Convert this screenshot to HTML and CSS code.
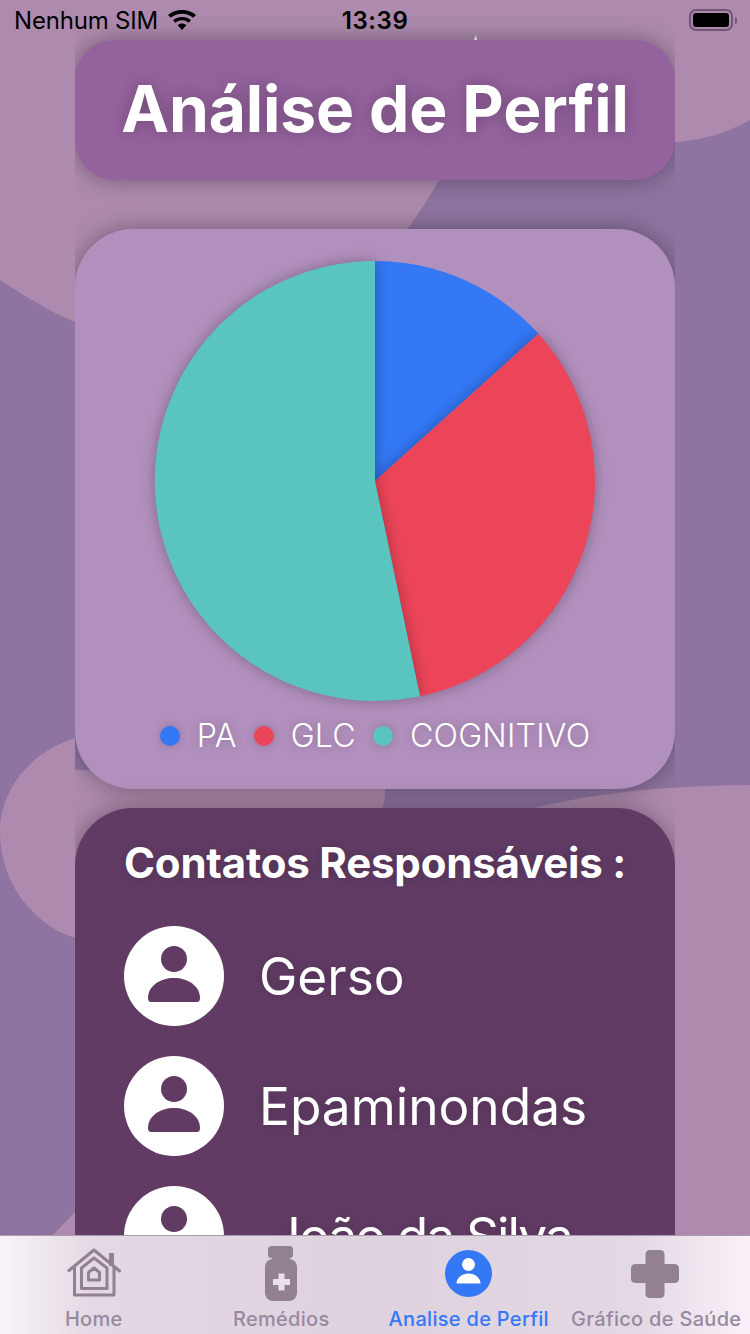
FILE: index.html
```html
<!DOCTYPE html>
<html lang="pt-BR">
<head>
  <meta charset="UTF-8">
  <meta name="viewport" content="width=device-width, initial-scale=1.0">
  <title>Análise de Perfil</title>
  <link rel="stylesheet" href="styles.css">
</head>
<body>
  <div class="screen">
    <!-- fundo -->
    <svg class="blobs" viewBox="0 0 750 1334" width="750" height="1334">
      <path d="M0 0H750V120C725 134 695 143 655 143C590 143 520 148 470 150L438 182C425 205 415 218 407 230C330 300 200 335 75 322C50 312 25 296 0 280Z"/>
      <path d="M75 738C30 752 0 790 0 832C0 885 35 925 75 938C160 960 385 900 385 790V770H75Z"/>
      <path d="M750 785C680 786 610 790 538 807C500 818 470 835 450 860V1000H600V1334H750Z"/>
      <path d="M52 1236L75 1212V1240H52Z"/>
      <path class="tick" d="M474 40L476 35L477 40Z"/>
    </svg>

    <div class="status-bar">
      <div class="status-left">
        <span>Nenhum SIM</span>
        <svg class="wifi" viewBox="0 0 30 20" width="30" height="20">
          <path d="M15 20L10.6 15.2C13 13 17 13 19.4 15.2Z"/>
          <path d="M8.4 12.8L6 10.2C10.800 5.800 19.200 5.800 24 10.200L21.600 12.800C18 9.500 12 9.500 8.400 12.800Z"/>
          <path d="M3.800 7.800L1 4.900C8.500 -1.600 21.500 -1.600 29 4.900L26.200 7.800C19.800 2.400 10.200 2.400 3.800 7.800Z"/>
        </svg>
      </div>
      <div class="status-time">13:39</div>
      <div class="status-right">
        <div class="battery"><div class="battery-fill"></div></div>
        <div class="battery-tip"></div>
      </div>
    </div>

    <div class="content">
      <div class="title-card">
        <h1>Análise de Perfil</h1>
      </div>

      <div class="chart-card">
        <svg class="pie" viewBox="0 0 440 440" width="440" height="440">
          <path class="slice-blue" d="M220 220V0A220 220 0 0 1 383.500 72.800Z"/>
          <path class="slice-red" d="M220 220L383.500 72.800A220 220 0 0 1 265 435.300Z"/>
          <path class="slice-teal" d="M220 220L265 435.300A220 220 0 1 1 220 0Z"/>
        </svg>
        <div class="legend">
          <div class="dot dot-blue"></div><span>PA</span>
          <div class="dot dot-red"></div><span>GLC</span>
          <div class="dot dot-teal"></div><span>COGNITIVO</span>
        </div>
      </div>

      <div class="contacts-card">
        <h2>Contatos Responsáveis :</h2>
        <div class="contact">
          <svg class="avatar" viewBox="0 0 100 100" width="100" height="100">
            <circle cx="50" cy="50" r="50" fill="#fff"/>
            <circle cx="50" cy="33" r="13" fill="#613b64"/>
            <path fill="#613b64" d="M24 72C24 60 36 52 50 52C64 52 76 60 76 72Q76 76 73 76H27Q24 76 24 72Z"/>
          </svg>
          <span>Gerso</span>
        </div>
        <div class="contact">
          <svg class="avatar" viewBox="0 0 100 100" width="100" height="100">
            <circle cx="50" cy="50" r="50" fill="#fff"/>
            <circle cx="50" cy="33" r="13" fill="#613b64"/>
            <path fill="#613b64" d="M24 72C24 60 36 52 50 52C64 52 76 60 76 72Q76 76 73 76H27Q24 76 24 72Z"/>
          </svg>
          <span>Epaminondas</span>
        </div>
        <div class="contact">
          <svg class="avatar" viewBox="0 0 100 100" width="100" height="100">
            <circle cx="50" cy="50" r="50" fill="#fff"/>
            <circle cx="50" cy="33" r="13" fill="#613b64"/>
            <path fill="#613b64" d="M24 72C24 60 36 52 50 52C64 52 76 60 76 72Q76 76 73 76H27Q24 76 24 72Z"/>
          </svg>
          <span class="name-tight">&nbsp;João da Silva</span>
        </div>
      </div>
    </div>

    <!-- abas -->
    <nav class="tab-bar">
      <div class="tab">
        <svg class="tab-icon" viewBox="0 0 54 50" width="54" height="50">
          <g fill="none" stroke="#918191" stroke-width="3" stroke-linejoin="round" stroke-linecap="round">
            <path d="M2 22.500L27 2L52.500 23"/>
            <path d="M7.500 20V47H47V20"/>
            <path d="M14.500 20V40.500H40V20L27 10Z"/>
            <path d="M21.500 24.500L27 20L32.500 24.500V32H21.500Z"/>
          </g>
          <rect x="42" y="5" width="5" height="13" fill="#918191"/>
        </svg>
        <span>Home</span>
      </div>
      <div class="tab">
        <svg class="tab-icon" viewBox="0 2 54 50" width="54" height="50">
          <rect x="14" y="0" width="25" height="12" rx="3.500" fill="#918191"/>
          <rect x="18" y="8" width="18" height="8" fill="#918191"/>
          <rect x="11" y="13" width="32" height="42" rx="8" fill="#918191"/>
          <path fill="#e9e0e9" d="M24.500 27.500H30.500V33H36V39H30.500V44.500H24.500V39H19V33H24.500Z"/>
        </svg>
        <span>Remédios</span>
      </div>
      <div class="tab tab-active">
        <svg class="tab-icon" viewBox="0 0 54 50" width="54" height="50">
          <circle cx="26.500" cy="25.500" r="23.500" fill="#3478f6"/>
          <circle cx="26.500" cy="16.500" r="6.500" fill="#fff"/>
          <path fill="#fff" d="M14.500 35.500C14.500 29.500 20.500 25.500 26.500 25.500C32.500 25.500 38.500 29.500 38.500 35.500Z"/>
        </svg>
        <span>Analise de Perfil</span>
      </div>
      <div class="tab">
        <svg class="tab-icon" viewBox="1 -1 54 50" width="54" height="50">
          <path fill="#918191" d="M22 1H32Q36.500 1 36.500 5.500V15H46Q51 15 51 19.500V29.500Q51 34 46 34H36.500V44.500Q36.500 49 32 49H22Q17.500 49 17.500 44.500V34H8Q3 34 3 29.500V19.500Q3 15 8 15H17.500V5.500Q17.500 1 22 1Z"/>
        </svg>
        <span>Gráfico de Saúde</span>
      </div>
    </nav>
  </div>
</body>
</html>
```

FILE: styles.css
```css
/* tela inteira */
body {
  margin: 0;
  font-family: "Inter", "Liberation Sans", sans-serif;
}
.screen {
  position: relative;
  width: 750px;
  height: 1334px;
  overflow: hidden;
  background-color: #8f74a1;
}
.blobs {
  position: absolute;
  top: 0;
  left: 0;
  fill: #ae8bae;
}
.tick {
  fill: #fff;
}

/* barra de status */
.status-bar {
  position: relative;
  display: grid;
  grid-template-columns: 1fr 1fr 1fr;
  align-items: center;
  height: 40px;
  padding: 0 14px;
  box-sizing: border-box;
  color: #000;
  font-size: 24px;
}
.status-left {
  display: flex;
  align-items: center;
  gap: 9px;
  letter-spacing: -0.2px;
}
.status-time {
  text-align: center;
  font-weight: 600;
  letter-spacing: 0.6px;
}
.status-right {
  display: flex;
  justify-content: flex-end;
  align-items: center;
  gap: 2px;
  margin-right: -1px;
}
.battery {
  width: 44px;
  height: 22px;
  box-sizing: border-box;
  border: 2px solid #6f5775;
  border-radius: 7px;
  padding: 2px;
}
.battery-fill {
  height: 100%;
  background-color: #000;
  border-radius: 3px;
}
.battery-tip {
  width: 2px;
  height: 7px;
  background-color: #6f5775;
  border-radius: 0 2px 2px 0;
}
.wifi {
  fill: #000;
}

/* coluna dos cartões */
.content {
  position: relative;
  width: 600px;
  margin: 0 auto;
  overflow-x: clip;
  display: flex;
  flex-direction: column;
}
.title-card {
  height: 140px;
  padding-bottom: 4px;
  box-sizing: border-box;
  display: flex;
  align-items: center;
  justify-content: center;
  background-color: #94629d;
  border-radius: 40px;
  box-shadow: 0 0 24px rgba(0, 0, 0, 0.35);
}
h1 {
  margin: 0;
  color: #fff;
  font-size: 64px;
  font-weight: 700;
  letter-spacing: -0.1px;
  text-shadow: 0 0 16px rgba(0, 0, 0, 0.25);
}
.chart-card {
  margin-top: 49px;
  height: 560px;
  box-sizing: border-box;
  padding-top: 32px;
  display: flex;
  flex-direction: column;
  align-items: center;
  background-color: #b290be;
  border-radius: 58px;
  box-shadow: 0 0 24px rgba(0, 0, 0, 0.35);
}
.pie {
  overflow: visible;
}
.slice-blue {
  fill: #3478f6;
}
.slice-red {
  fill: #ec4559;
  filter: drop-shadow(0 0 7px rgba(0, 0, 0, 0.3));
}
.slice-teal {
  fill: #5ac4be;
  filter: drop-shadow(0 0 7px rgba(0, 0, 0, 0.3));
}
.legend {
  margin-top: 15px;
  display: flex;
  align-items: center;
  gap: 17px;
  color: #fff;
  font-size: 32.2px;
  font-weight: 300;
  letter-spacing: 0.2px;
  text-shadow: 0 0 10px rgba(0, 0, 0, 0.25);
}
.dot {
  width: 20px;
  height: 20px;
  border-radius: 50%;
  box-shadow: 0 0 10px rgba(0, 0, 0, 0.2);
}
.dot-blue {
  background-color: #3478f6;
}
.dot-red {
  background-color: #ec4559;
}
.dot-teal {
  background-color: #5ac4be;
}
.contacts-card {
  margin-top: 19px;
  height: 560px;
  box-sizing: border-box;
  padding: 29px 49px;
  display: flex;
  flex-direction: column;
  gap: 30px;
  background-color: #613b64;
  border-radius: 58px;
  box-shadow: 0 0 24px rgba(0, 0, 0, 0.35);
}
h2 {
  margin: 0 0 8px;
  color: #fff;
  font-size: 42px;
  font-weight: 700;
  letter-spacing: -0.2px;
  white-space: nowrap;
  text-shadow: 0 0 12px rgba(0, 0, 0, 0.2);
}
.contact {
  display: flex;
  align-items: center;
  gap: 35px;
  color: #fff;
  font-size: 51.4px;
  font-weight: 400;
  text-shadow: 0 0 12px rgba(0, 0, 0, 0.2);
}
.name-tight {
  letter-spacing: -1.9px;
}
.avatar {
  flex-shrink: 0;
}

/* abas de baixo */
.tab-bar {
  position: absolute;
  left: 0;
  right: 0;
  bottom: 0;
  height: 99px;
  box-sizing: border-box;
  border-top: 1px solid #a99aa9;
  display: grid;
  grid-template-columns: repeat(4, 1fr);
  background: linear-gradient(90deg, #faf3fa 0%, #e3d9e4 12%, #ddd2de 50%, #e3d9e4 85%, #faf0fa 100%);
}
.tab {
  display: flex;
  flex-direction: column;
  align-items: center;
  height: 98px;
  color: #97899f;
  font-size: 20px;
  font-weight: 500;
  letter-spacing: 0.3px;
  white-space: nowrap;
}
.tab-icon {
  display: block;
  margin-top: 12px;
  overflow: visible;
}
.tab span {
  margin-top: 9px;
}
.tab-active {
  color: #3478f6;
}
```
